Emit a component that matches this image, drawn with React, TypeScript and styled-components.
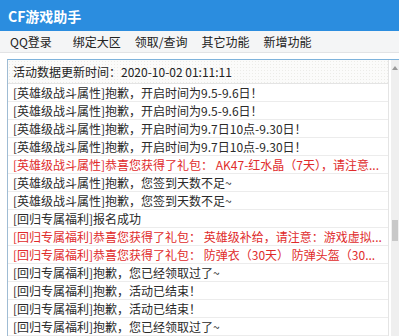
import React from "react";
import styled, { createGlobalStyle } from "styled-components";

const GlobalStyle = createGlobalStyle`
  html, body {
    margin: 0;
    padding: 0;
    width: 399px;
    height: 336px;
    overflow: hidden;
    background: #ffffff;
    font-family: "Noto Sans CJK SC", "Noto Sans", sans-serif;
  }
`;

const StyledWindow = styled.div`
  display: flex;
  flex-direction: column;
  width: 399px;
  height: 336px;
  background: #ffffff;
`;

const StyledTitleBar = styled.div`
  display: flex;
  align-items: center;
  height: 31px;
  padding-left: 8px;
  background-color: #2b8ddf;
  color: #ffffff;
  font-size: 14px;
  font-weight: bold;
`;

const StyledMenuBar = styled.div`
  display: flex;
  align-items: center;
  height: 21px;
  padding-left: 10px;
  gap: 14px;
  background-color: #f4f5f6;
  border-bottom: 1px solid #e2e3e5;
  font-size: 12px;
  color: #222;
`;

const StyledMenuItem = styled.span<{ $wide?: boolean }>`
  white-space: nowrap;
  margin-right: ${(p) => (p.$wide ? "7px" : "0")};
`;

const StyledBody = styled.div`
  display: flex;
  flex-grow: 1;
  padding: 6px 0 0 7px;
  min-height: 0;
`;

const StyledList = styled.div`
  display: flex;
  flex-grow: 1;
  border-top: 1px solid #7eb3dc;
  border-left: 1px solid #9fbcd4;
  min-height: 0;
  overflow: hidden;
`;

const StyledRows = styled.div`
  display: flex;
  flex-direction: column;
  width: 381px;
  border-right: 1px solid #e4e4e4;
`;

const StyledHeader = styled.div`
  display: flex;
  align-items: center;
  height: 23px;
  padding-left: 5px;
  font-size: 12px;
  color: #222;
  background-color: #fbfbfa;
  background-image: radial-gradient(#ecece8 0.6px, transparent 0.7px);
  background-size: 3px 3px;
  border-bottom: 1px solid #e4e4e4;
  flex-shrink: 0;
`;

const StyledRow = styled.div<{ $hot?: boolean }>`
  display: flex;
  align-items: center;
  height: 17px;
  padding-left: 5px;
  font-size: 12px;
  white-space: nowrap;
  overflow: hidden;
  color: ${(p) => (p.$hot ? "#e02b2b" : "#2a2a2a")};
  border-bottom: 1px solid #ececec;
  flex-shrink: 0;
`;

const StyledScrollBar = styled.div`
  position: relative;
  width: 8px;
  margin-left: 2px;
  background-color: #efefef;
  flex-shrink: 0;
`;

const StyledArrow = styled.div`
  position: absolute;
  top: 6px;
  left: 1px;
  width: 0;
  height: 0;
  border-left: 3px solid transparent;
  border-right: 3px solid transparent;
  border-bottom: 4px solid #9a9a9a;
`;

const StyledThumb = styled.div`
  position: absolute;
  top: 160px;
  left: 1px;
  width: 6px;
  height: 21px;
  background-color: #c8c8c8;
`;

const menu = ["QQ登录", "绑定大区", "领取/查询", "其它功能", "新增功能"];

const rows: { text: string; hot?: boolean }[] = [
  { text: "[英雄级战斗属性]抱歉，开启时间为9.5-9.6日！" },
  { text: "[英雄级战斗属性]抱歉，开启时间为9.5-9.6日！" },
  { text: "[英雄级战斗属性]抱歉，开启时间为9.7日10点-9.30日！" },
  { text: "[英雄级战斗属性]抱歉，开启时间为9.7日10点-9.30日！" },
  { text: "[英雄级战斗属性]恭喜您获得了礼包： AK47-红水晶（7天），请注意...", hot: true },
  { text: "[英雄级战斗属性]抱歉，您签到天数不足~" },
  { text: "[英雄级战斗属性]抱歉，您签到天数不足~" },
  { text: "[回归专属福利]报名成功" },
  { text: "[回归专属福利]恭喜您获得了礼包： 英雄级补给，请注意：游戏虚拟...", hot: true },
  { text: "[回归专属福利]恭喜您获得了礼包： 防弹衣（30天） 防弹头盔（30...", hot: true },
  { text: "[回归专属福利]抱歉，您已经领取过了~" },
  { text: "[回归专属福利]抱歉，活动已结束！" },
  { text: "[回归专属福利]抱歉，活动已结束！" },
  { text: "[回归专属福利]抱歉，您已经领取过了~" },
];

const App: React.FC = () => {
  return (
    <StyledWindow>
      <GlobalStyle />
      <StyledTitleBar>CF游戏助手</StyledTitleBar>
      <StyledMenuBar>
        {menu.map((m, i) => (
          <StyledMenuItem key={m} $wide={i === 0}>
            {m}
          </StyledMenuItem>
        ))}
      </StyledMenuBar>
      <StyledBody>
        <StyledList>
          <StyledRows>
            <StyledHeader>活动数据更新时间：2020-10-02 01:11:11</StyledHeader>
            {rows.map((r, i) => (
              <StyledRow key={i} $hot={r.hot}>
                {r.text}
              </StyledRow>
            ))}
          </StyledRows>
          <StyledScrollBar>
            <StyledArrow />
            <StyledThumb />
          </StyledScrollBar>
        </StyledList>
      </StyledBody>
    </StyledWindow>
  );
};

export default App;
